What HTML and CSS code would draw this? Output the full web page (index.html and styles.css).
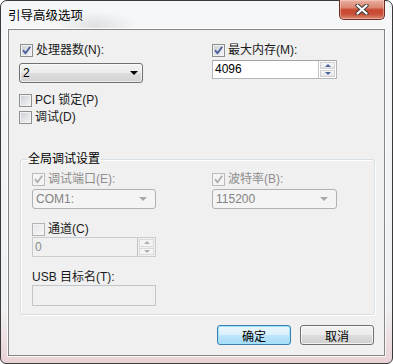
FILE: index.html
```html
<!DOCTYPE html>
<html lang="zh-CN">
<head>
    <meta charset="UTF-8">
    <title>引导高级选项</title>
    <link rel="stylesheet" href="styles.css">
</head>
<body>
    <div class="window">
        <div class="titlebar">
            <span class="title">引导高级选项</span>
            <button class="close" aria-label="关闭">
                <svg width="14" height="11" viewBox="0 0 14 11">
                    <path d="M2.5 1.5 L11.5 9.5 M11.5 1.5 L2.5 9.5" stroke="#3d3d3d" stroke-width="4.2" stroke-linecap="round"/>
                    <path d="M2.5 1.5 L11.5 9.5 M11.5 1.5 L2.5 9.5" stroke="#fff" stroke-width="2.2" stroke-linecap="round"/>
                </svg>
            </button>
        </div>

        <div class="client">
            <div class="top-grid">
                <div class="col">
                    <label class="check-row">
                        <span class="box"><svg viewBox="0 0 11 11"><path class="tick" d="M2 5.2 L4.5 8.3 L9.2 1.8"/></svg></span>
                        处理器数(N):
                    </label>
                    <div class="combo">
                        <span>2</span>
                        <span class="arrow"></span>
                    </div>
                    <label class="check-row pci"><span class="box"></span>PCI 锁定(P)</label>
                    <label class="check-row debug"><span class="box"></span>调试(D)</label>
                </div>
                <div class="col">
                    <label class="check-row">
                        <span class="box"><svg viewBox="0 0 11 11"><path class="tick" d="M2 5.2 L4.5 8.3 L9.2 1.8"/></svg></span>
                        最大内存(M):
                    </label>
                    <div class="spin">
                        <span class="spin-value">4096</span>
                        <span class="spin-btns">
                            <span class="spin-btn"><span class="up"></span></span>
                            <span class="spin-btn"><span class="down"></span></span>
                        </span>
                    </div>
                </div>
            </div>

            <fieldset class="group">
                <legend>全局调试设置</legend>
                <div class="group-grid">
                    <div class="col">
                        <label class="check-row disabled">
                            <span class="box"><svg viewBox="0 0 11 11"><path class="tick" d="M2 5.2 L4.5 8.3 L9.2 1.8"/></svg></span>
                            调试端口(E):
                        </label>
                        <div class="combo disabled">
                            <span>COM1:</span>
                            <span class="arrow"></span>
                        </div>
                        <label class="check-row channel"><span class="box"></span>通道(C)</label>
                        <div class="spin disabled">
                            <span class="spin-value">0</span>
                            <span class="spin-btns">
                                <span class="spin-btn"><span class="up"></span></span>
                                <span class="spin-btn"><span class="down"></span></span>
                            </span>
                        </div>
                        <div class="field-label">USB 目标名(T):</div>
                        <div class="textbox"></div>
                    </div>
                    <div class="col">
                        <label class="check-row disabled">
                            <span class="box"><svg viewBox="0 0 11 11"><path class="tick" d="M2 5.2 L4.5 8.3 L9.2 1.8"/></svg></span>
                            波特率(B):
                        </label>
                        <div class="combo disabled">
                            <span>115200</span>
                            <span class="arrow"></span>
                        </div>
                    </div>
                </div>
            </fieldset>

            <div class="actions">
                <button class="btn default">确定</button>
                <button class="btn">取消</button>
            </div>
        </div>
    </div>
</body>
</html>
```

FILE: styles.css
```css
body {
    margin: 0;
    background: #ffffff;
    font-family: "Liberation Sans", "Noto Sans CJK SC", sans-serif;
    font-size: 12px;
    color: #1a1a1a;
}

.window {
    width: 393px;
    height: 364px;
    box-sizing: border-box;
    border: 1px solid #3a3a3a;
    border-radius: 7px 7px 6px 6px;
    padding: 0 7px 7px;
    display: flex;
    flex-direction: column;
    background:
        radial-gradient(ellipse 40px 14px at 95px 24px, rgba(160,160,160,.25), transparent),
        linear-gradient(to bottom, rgba(255,255,255,0) 85%, rgba(230,190,195,.6) 100%),
        linear-gradient(to bottom, #f6f7f8, #eeeff1);
}

/* title bar */
.titlebar {
    height: 28px;
    display: flex;
    justify-content: space-between;
    align-items: flex-start;
}

.title {
    margin-top: 6px;
    font-family: "Noto Sans CJK SC", sans-serif;
    font-size: 12.5px;
    line-height: 16px;
    color: #000;
}

.close {
    width: 46px;
    height: 20px;
    margin-top: -1px;
    padding: 0;
    border: 1px solid #6a2c25;
    border-top: none;
    border-radius: 0 0 5px 5px;
    background: linear-gradient(to bottom, #eab0a2 0%, #db8670 40%, #c8472f 52%, #c9503a 75%, #de8a72 100%);
    box-shadow: inset 0 0 0 1px rgba(255,220,210,.45);
    display: flex;
    align-items: center;
    justify-content: center;
}

/* client area */
.client {
    flex: 1;
    border: 1px solid #858585;
    box-shadow: 0 0 0 1px rgba(255,255,255,.8);
    background: #f0f0f0;
    padding: 13px 10px 10px 10px;
    display: flex;
    flex-direction: column;
}

.top-grid,
.group-grid {
    display: grid;
    grid-template-columns: 124px 125px;
}

.top-grid {
    column-gap: 69px;
}

.group-grid {
    column-gap: 56px;
    padding-left: 5px;
    margin-top: 6px;
}

.col {
    display: flex;
    flex-direction: column;
}

/* checkboxes */
.check-row {
    height: 14px;
    line-height: 14px;
    display: flex;
    align-items: center;
    gap: 3px;
    white-space: nowrap;
}

.box {
    width: 11px;
    height: 11px;
    flex: none;
    border: 1px solid #8e8f8f;
    background: linear-gradient(135deg, #c9cdd4, #f7f7f7);
    box-shadow: inset 0 0 0 1px #f2f2f2;
    position: relative;
}

.box svg {
    position: absolute;
    left: 0;
    top: 0;
    width: 11px;
    height: 11px;
}

.tick {
    fill: none;
    stroke: #4a5f9b;
    stroke-width: 1.9;
}

.top-grid .col:first-child .check-row:first-child .box {
    margin-left: 1px;
}

.check-row.pci {
    margin-top: 10px;
}

.check-row.debug {
    margin-top: 3px;
}

.check-row.disabled {
    color: #8d8d8d;
}

.check-row.disabled .box {
    border-color: #bcbcbc;
    background: #f4f4f4;
    box-shadow: none;
}

.check-row.disabled .tick {
    stroke: #b0b0b0;
}

.check-row.channel {
    margin-top: 13px;
}

.check-row.channel .box {
    border-color: #b4b4b4;
    background: linear-gradient(135deg, #e2e4e8, #f8f8f8);
}

/* combo boxes */
.combo {
    height: 20px;
    box-sizing: border-box;
    margin-top: 6px;
    border: 1px solid #707070;
    border-radius: 3px;
    background: linear-gradient(to bottom, #f3f3f3 0%, #ebebeb 50%, #dddddd 51%, #d2d2d2 100%);
    box-shadow: inset 0 0 0 1px rgba(255,255,255,.6);
    display: flex;
    align-items: center;
    justify-content: space-between;
    padding: 0 4px 0 3px;
    color: #000;
}

.arrow {
    width: 0;
    height: 0;
    border-left: 4px solid transparent;
    border-right: 4px solid transparent;
    border-top: 4px solid #000;
}

.combo.disabled {
    margin-top: 3px;
    border-color: #adb2b5;
    background: #f4f4f4;
    box-shadow: none;
    color: #838383;
}

.combo.disabled .arrow {
    border-top-color: #a8a8a8;
    margin-right: 4px;
}

/* spinners */
.spin {
    height: 19px;
    box-sizing: border-box;
    margin-top: 3px;
    border: 1px solid #b4b6bc;
    border-top-color: #a0a3aa;
    background: #ffffff;
    display: flex;
    align-items: stretch;
    color: #000;
}

.spin-value {
    flex: 1;
    padding-left: 2px;
    line-height: 17px;
}

.spin-btns {
    width: 17px;
    display: flex;
    flex-direction: column;
    border-left: 1px solid #c4c4c4;
}

.spin-btn {
    flex: 1;
    margin: 1px 1px 0 1px;
    border: 1px solid #d0d0d0;
    background: linear-gradient(to bottom, #f8f8f8, #e6e6e6);
    display: flex;
    align-items: center;
    justify-content: center;
}

.spin-btn:last-child {
    margin-bottom: 1px;
}

.up,
.down {
    width: 0;
    height: 0;
    border-left: 3px solid transparent;
    border-right: 3px solid transparent;
}

.up {
    border-bottom: 3px solid #4d629f;
}

.down {
    border-top: 3px solid #4d629f;
}

.spin.disabled {
    height: 20px;
    margin-top: 1px;
    border-color: #c8ccd0;
    background: #f0f0f0;
    color: #8a8a8a;
}

.spin.disabled .spin-value {
    line-height: 18px;
}

.spin.disabled .spin-btn {
    background: #f4f4f4;
    border-color: #dadada;
}

.spin.disabled .up {
    border-bottom-color: #b0b0b0;
}

.spin.disabled .down {
    border-top-color: #b0b0b0;
}

.field-label {
    margin-top: 13px;
    height: 14px;
    line-height: 14px;
    white-space: nowrap;
}

.textbox {
    margin-top: 1px;
    height: 21px;
    box-sizing: border-box;
    border: 1px solid #c2c6ca;
    background: #f0f0f0;
}

/* group box */
.group {
    margin: 28px 0 0 1px;
    width: 355px;
    box-sizing: border-box;
    padding: 0 0 8px 6px;
    border: 1px solid #d5dfe5;
    border-radius: 3px;
    box-shadow: inset 1px 1px 0 #fff, 1px 1px 0 #fff;
    min-width: 0;
}

.group legend {
    padding: 0 1px;
    line-height: 14px;
    height: 14px;
    color: #000;
}

/* buttons */
.actions {
    margin-top: 10px;
    display: flex;
    justify-content: flex-end;
    gap: 9px;
}

.btn {
    width: 74px;
    height: 20px;
    padding: 0;
    font-family: "Noto Sans CJK SC", sans-serif;
    font-size: 12px;
    color: #000;
    border: 1px solid #707070;
    border-radius: 3px;
    background: linear-gradient(to bottom, #f2f2f2 0%, #ebebeb 50%, #dddddd 51%, #cfcfcf 100%);
    box-shadow: inset 0 0 0 1px rgba(255,255,255,.7);
}

.btn.default {
    border-color: #3c7fb1;
    background: linear-gradient(to bottom, #eaf6fd 0%, #d9f0fc 50%, #bee6fd 51%, #a7d9f5 100%);
    box-shadow: inset 0 0 0 1px #9fe4fc;
}
```
